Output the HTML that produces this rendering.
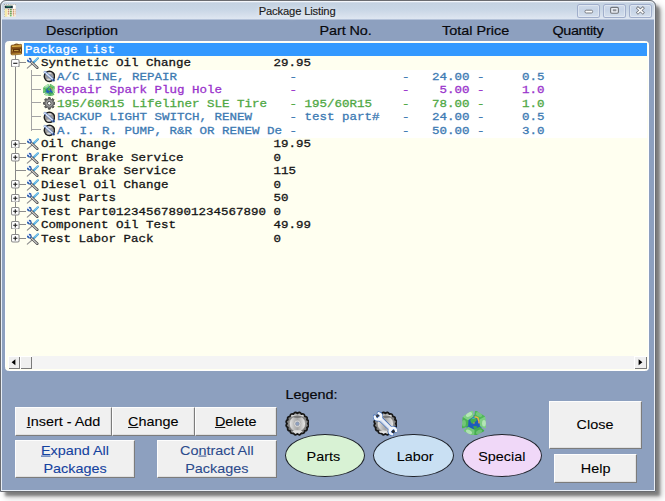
<!DOCTYPE html>
<html><head><meta charset="utf-8"><title>Package Listing</title>
<style>
html,body{margin:0;padding:0;background:#fff;}
body{width:665px;height:501px;overflow:hidden;position:relative;font-family:"Liberation Sans",Arial,sans-serif;}
svg{display:block}
.win{position:absolute;left:0;top:0;width:656px;height:492px;border-radius:6px 6px 1px 1px;background:#8da0bf;box-shadow:4.5px 4.5px 3px -0.5px rgba(0,0,0,.4), 5.5px 5.5px 6px 0px rgba(0,0,0,.2);}
.win:before{content:"";position:absolute;left:0;top:0;right:0;bottom:0;border:1px solid #6a6c70;border-radius:6px 6px 1px 1px;pointer-events:none;z-index:6}
.win:after{content:"";position:absolute;left:1px;top:1px;right:1px;bottom:1px;border:1px solid #e8eef6;border-top-color:#f4f7fb;border-radius:5px 5px 0 0;pointer-events:none;z-index:5}
.tb{position:absolute;left:0;top:0;width:656px;height:20px;border-radius:6px 6px 0 0;background:linear-gradient(to bottom,#dbe4ef 0,#dbe4ef 2px,#c4d2e1 3px,#c9d7e6 10px,#d4deeb 14.5px,#dee6f1 18.6px,#b4c2d9 19.5px,#8da0bf 20px);}
.title{position:absolute;left:0.6px;width:593px;top:3px;-webkit-text-stroke:0.15px #1a1a1a;text-align:center;font-size:11.2px;line-height:16px;color:#1a1a1a;letter-spacing:-0.15px;text-shadow:0 0 5px rgba(255,255,255,.9)}
.wb{position:absolute;top:4.3px;height:13.6px;width:23.4px;box-sizing:border-box;border-radius:2.5px;background:linear-gradient(#cfdbea,#c6d3e6 45%,#c9d6e7 55%,#d6e0ee);box-shadow:inset 0 0 0 1px #a0aecb, inset 0 0 0 2px rgba(255,255,255,.35)}
.hdr{position:absolute;top:22px;font-size:14.4px;line-height:16px;color:#08080c;-webkit-text-stroke:0.22px currentColor;white-space:nowrap;transform:scaleY(0.945);transform-origin:0 13px}
.tree{position:absolute;left:5.2px;top:40.6px;width:643.8px;height:330.4px;box-sizing:border-box;background:#fffff0;border:1.6px solid #fff;border-radius:3.5px;}
.tin{position:absolute;left:0;top:0;width:665px;height:501px}
.tin > *{position:absolute}
.t{font-family:"Liberation Mono","Courier New",monospace;font-weight:normal;-webkit-text-stroke:0.28px currentColor;font-size:10.5px;line-height:13.5px;height:13.5px;white-space:pre;color:#141414;letter-spacing:0;transform:scale(1.1905,0.96);transform-origin:0 72%}
.t.w{color:#fff}
.t.blue{color:#3d7ab3}
.t.purple{color:#9a33cc}
.t.green{color:#4fa844}
.sel{left:24px;width:623px;height:12.6px;background:#3399ff}
.cbg{left:56.5px;width:590.5px;background:#fff}
.hl{height:1px;background:#8c8c8c}
.hl.c{height:1px;background:#a4a4a4}
.vl{width:1px;background:#868686}
.vl.c{width:1px;background:#a4a4a4}
.sb{left:7.6px;top:356px;width:639.6px;height:12.7px;background:#f4f4f4}
.sbb{top:356.2px;width:12.4px;height:12.4px;background:#efefef;box-shadow:inset 1px 1px 0 #fff, inset -1px -1px 0 #7a7a7a}
.btn{position:absolute;background:#f0f0f0;box-sizing:border-box;border:1px solid;border-color:#fdfdfd #7c7c7c #7c7c7c #fdfdfd;box-shadow:inset -1px -1px 0 #e0e0e0;font-size:14.4px;color:#000;text-align:center;white-space:nowrap}
.btn u{text-decoration:underline;text-underline-offset:1px}
.btn.bl{color:#1c3c9c}
.btn.bl .s{position:relative;top:-1px}
.ell{position:absolute;box-sizing:border-box;border:1px solid #20242c;border-radius:50%;font-size:14.4px;color:#000;text-align:center}
.lg{position:absolute}
.s{display:inline-block;transform:scaleY(0.945);transform-origin:50% 70%;-webkit-text-stroke:0.1px currentColor}
.ell .s{-webkit-text-stroke:0.08px currentColor}
</style></head><body>
<svg width="0" height="0" style="position:absolute" aria-hidden="true"><linearGradient id="g-m1" x1="0" y1="0" x2="0" y2="1"><stop offset="0" stop-color="#5a5a5a"/><stop offset="0.14" stop-color="#d8d8d8"/><stop offset="0.24" stop-color="#7c7c7c"/><stop offset="0.5" stop-color="#8c8c8c"/><stop offset="0.82" stop-color="#6c6c6c"/><stop offset="0.93" stop-color="#e0e0e0"/><stop offset="1" stop-color="#666"/></linearGradient><linearGradient id="g-m2" x1="0" y1="0" x2="1" y2="0"><stop offset="0" stop-color="#e8e8e8"/><stop offset="0.3" stop-color="#bcbcbc"/><stop offset="0.5" stop-color="#a4a4a4"/><stop offset="0.7" stop-color="#c0c0c0"/><stop offset="1" stop-color="#ececec"/></linearGradient><linearGradient id="g-br" x1="0" y1="0" x2="0" y2="1"><stop offset="0" stop-color="#a06c24"/><stop offset="0.5" stop-color="#7c4a14"/><stop offset="1" stop-color="#8e5e20"/></linearGradient><radialGradient id="g-cog" cx="50%" cy="50%" r="50%"><stop offset="0" stop-color="#f0f0f0"/><stop offset="0.3" stop-color="#c8c8c8"/><stop offset="0.62" stop-color="#7e7e7e"/><stop offset="1" stop-color="#505050"/></radialGradient></svg>
<div class="win">
 <div class="tb"></div>
 <svg style="position:absolute;left:3.8px;top:3.8px" width="12.4" height="13.4" viewBox="0 0 11 13" preserveAspectRatio="none"><rect x="0.3" y="0.3" width="10.4" height="12.4" fill="#fffdf0" stroke="#777" stroke-width="0.6" stroke-dasharray="0.8 0.8"/><rect x="0.8" y="1.6" width="7" height="2.6" fill="#17333f"/><rect x="2" y="2.2" width="4" height="0.8" fill="#2f8f6a"/><rect x="8" y="1.2" width="2.2" height="3" fill="#fff"/><rect x="0.8" y="4.6" width="2.2" height="7.6" fill="#f6e9a8"/><rect x="3.4" y="4.6" width="7" height="7.6" fill="#fbf6e4"/><path d="M3.4 5.6h7M3.4 7.6h7M3.4 9.6h7" stroke="#a83a2a" stroke-width="0.8" stroke-dasharray="1.2 1"/><path d="M6 5v7" stroke="#3fae4a" stroke-width="1.6" stroke-dasharray="1 1"/><path d="M8.6 5v7" stroke="#d8a070" stroke-width="1" stroke-dasharray="1 1"/></svg>
 <div class="title">Package Listing</div>
 <div class="wb" style="left:577px"><svg width="23.4" height="13" viewBox="0 0 23.4 13"><rect x="8" y="6.2" width="7.6" height="2.8" rx="1.2" fill="#fdfdfd" stroke="#6f7378" stroke-width="0.9"/></svg></div>
 <div class="wb" style="left:603px"><svg width="23.4" height="13" viewBox="0 0 23.4 13"><rect x="7.6" y="3.4" width="7.8" height="5.8" rx="1.2" fill="#e9edf3" stroke="#71757b" stroke-width="1.1"/><rect x="9.8" y="5.2" width="3.6" height="2" rx="0.4" fill="#8c9098"/></svg></div>
 <div class="wb" style="left:628.6px"><svg width="23.4" height="13" viewBox="0 0 23.4 13"><path d="M9 4.2 L13.8 8.6 M13.8 4.2 L9 8.6" stroke="#73777d" stroke-width="3" stroke-linecap="square"/><path d="M9 4.2 L13.8 8.6 M13.8 4.2 L9 8.6" stroke="#fff" stroke-width="1.5" stroke-linecap="square"/></svg></div>
 <div class="hdr" style="left:46px">Description</div>
 <div class="hdr" style="left:319.6px;letter-spacing:-0.1px">Part No.</div>
 <div class="hdr" style="left:442px">Total Price</div>
 <div class="hdr" style="left:552.5px;letter-spacing:-0.36px">Quantity</div>
 <div class="tree"></div>
 <div class="tin">
<div class="vl" style="left:15.1px;top:55.0px;height:184.0px"></div>
<div class="vl c" style="left:31px;top:69.5px;height:61.400000000000006px"></div>
<div class="sel" style="top:43.2px"></div>
<svg class="ic" style="left:9.7px;top:43.2px" width="12.6" height="12.6" viewBox="0 0 13 13"><path d="M4.4 2.2 Q6.6 0.2 9 1.8" fill="none" stroke="#7a4c14" stroke-width="1.2"/><path d="M1 3.2 Q1 2 2.4 2 L11 1.4 Q12.4 1.4 12.4 2.8 L12.6 10 Q12.6 11.4 11 11.6 L2.6 12.4 Q1 12.4 0.9 11 Z" fill="url(#g-br)" stroke="#6a3e10" stroke-width="0.5"/><path d="M2.6 3.4 L11.4 2.9" stroke="#e2b84a" stroke-width="1.3" stroke-linecap="round"/><path d="M1.6 6.2 L12 5.8 L12 8.6 L1.6 9 Z" fill="#5e3208"/><path d="M2.4 6.6v2.2M4.2 7.8h4.6M10.8 6.4v2.2" stroke="#e8c45a" stroke-width="0.8"/><path d="M2.4 11.6 L11.2 10.9" stroke="#caa03c" stroke-width="0.9" stroke-linecap="round"/></svg>
<div class="t w" style="left:24.6px;top:43.6px">Package List</div>
<div class="hl" style="left:15.1px;top:62.4px;width:10.5px"></div>
<svg class="ic" style="left:11.1px;top:58.6px" width="8.6" height="8.6" viewBox="0 0 9 9"><rect x="0.55" y="0.55" width="7.9" height="7.9" rx="1.3" fill="#fff" stroke="#8a8a8a" stroke-width="1.1"/><path d="M2.3 4.5H6.7" stroke="#1a1a1a" stroke-width="1.15"/></svg>
<svg class="ic" style="left:26px;top:57.1px" width="13" height="12.4" viewBox="0 0 14 13"><path d="M7.2 6.8 L1.4 11.8" stroke="#8e8e8e" stroke-width="1.2" stroke-linecap="round"/><path d="M12.8 1.2 L8.2 5.6" stroke="#4aa6dc" stroke-width="2.3" stroke-linecap="round"/><path d="M12.6 1 L9.4 4" stroke="#a8dcf4" stroke-width="0.9" stroke-linecap="round"/><path d="M4.6 4.2 L12.2 11.4" stroke="#4c4c4c" stroke-width="2.7" stroke-linecap="round"/><path d="M5.4 5 L12 11.2" stroke="#dadada" stroke-width="1.1" stroke-linecap="round"/><circle cx="3.6" cy="3.2" r="2.5" fill="#2c5eb0"/><path d="M3.8 3.4 L0.6 2.2 L2.6 0.2 Z" fill="#fbfdff"/><circle cx="3.9" cy="3.5" r="0.9" fill="#e8f0fb"/></svg>
<div class="t" style="left:41.3px;top:57.1px">Synthetic Oil Change           29.95</div>
<div class="cbg" style="top:70.2px;height:67.5px"></div>
<div class="hl c" style="left:31px;top:75.2px;width:9.5px"></div>
<svg class="ic" style="left:42.6px;top:70.3px" width="12.6" height="12.6" viewBox="0 0 13 13"><circle cx="6.6" cy="6.5" r="5.3" fill="#9a9a9a" stroke="#1e1e1e" stroke-width="1.5"/><ellipse cx="6.6" cy="3.4" rx="2.4" ry="1" fill="#d0d0d0"/><ellipse cx="6" cy="9.8" rx="2.4" ry="1" fill="#d8d8d8"/><path d="M2 2.2 L11 10.6" stroke="#4a74c0" stroke-width="2.6" stroke-linecap="round"/><path d="M3 3.2 L10 9.6" stroke="#e4e8f0" stroke-width="1.5" stroke-linecap="butt"/><circle cx="2" cy="2.2" r="0.9" fill="#f4f6fa"/><circle cx="11" cy="10.4" r="0.8" fill="#1c2a48"/></svg>
<div class="t blue" style="left:57.1px;top:70.6px">A/C LINE, REPAIR               -              -   24.00 -     0.5</div>
<div class="hl c" style="left:31px;top:88.7px;width:9.5px"></div>
<svg class="ic" style="left:42.6px;top:83.8px" width="12.6" height="12.6" viewBox="0 0 24 24"><circle cx="12" cy="12.4" r="8.4" fill="#1f5cbc"/><path d="M8.6 8 q3.4 -2.6 6 -0.4 q0.6 2.4 -1.6 3.2 q-1.2 2.6 -3.4 1.4 q-2.2 -1.8 -1 -4.2z" fill="#44b04a"/><path d="M10 7.2 q2 -1.2 3.6 -0.2 q-1.6 1.4 -3.6 0.2z" fill="#4aa8f0"/><path d="M11 15.4 q2.4 -1 4.6 0.4 q-1 2.4 -3.4 2.2z" fill="#3fa648"/><path d="M11.4 11.4 l1.4 0.2 l-0.4 1.2 l-1.2 -0.2z" fill="#f0a03a"/><path d="M13.86 0.45L21.98 5.72L18.04 8.28L13.13 5.09Z" fill="#4fb858" stroke="#4fb858" stroke-width="1.8" stroke-linejoin="round"/><ellipse cx="17.00" cy="3.54" rx="3.3" ry="1.9" transform="rotate(30 17.00 3.54)" fill="#d8f4d8" opacity="0.28"/><path d="M22.60 6.80L23.11 16.46L18.72 14.78L18.42 8.93Z" fill="#7ccf82" stroke="#7ccf82" stroke-width="1.8" stroke-linejoin="round"/><ellipse cx="22.00" cy="12.20" rx="3.3" ry="1.9" transform="rotate(90 22.00 12.20)" fill="#d8f4d8" opacity="0.6"/><path d="M21.25 19.69L12.62 24.08L12.38 19.39L17.60 16.73Z" fill="#46ae50" stroke="#46ae50" stroke-width="1.8" stroke-linejoin="round"/><ellipse cx="17.00" cy="20.86" rx="3.3" ry="1.9" transform="rotate(150 17.00 20.86)" fill="#d8f4d8" opacity="0.28"/><path d="M11.38 24.08L2.75 19.69L6.40 16.73L11.62 19.39Z" fill="#72c878" stroke="#72c878" stroke-width="1.8" stroke-linejoin="round"/><ellipse cx="7.00" cy="20.86" rx="3.3" ry="1.9" transform="rotate(210 7.00 20.86)" fill="#d8f4d8" opacity="0.6"/><path d="M0.89 16.46L1.40 6.80L5.58 8.93L5.28 14.78Z" fill="#4cb454" stroke="#4cb454" stroke-width="1.8" stroke-linejoin="round"/><ellipse cx="2.00" cy="12.20" rx="3.3" ry="1.9" transform="rotate(270 2.00 12.20)" fill="#d8f4d8" opacity="0.28"/><path d="M2.02 5.72L10.14 0.45L10.87 5.09L5.96 8.28Z" fill="#80d286" stroke="#80d286" stroke-width="1.8" stroke-linejoin="round"/><ellipse cx="7.00" cy="3.54" rx="3.3" ry="1.9" transform="rotate(330 7.00 3.54)" fill="#d8f4d8" opacity="0.6"/><path d="M13 6 q2.2 -0.2 3.2 1.2 M16.2 8.6 q1.2 1.4 0.8 3.2" stroke="#f2b43a" stroke-width="1.5" fill="none" stroke-linecap="round"/></svg>
<div class="t purple" style="left:57.1px;top:84.1px">Repair Spark Plug Hole         -              -    5.00 -     1.0</div>
<div class="hl c" style="left:31px;top:102.2px;width:9.5px"></div>
<svg class="ic" style="left:42.6px;top:97.3px" width="12.6" height="12.6" viewBox="0 0 13 13"><path d="M10.66 4.78L10.86 5.37L12.54 5.62L12.54 7.38L10.86 7.63L10.66 8.22L10.38 8.78L11.39 10.15L10.15 11.39L8.78 10.38L8.22 10.66L7.63 10.86L7.38 12.54L5.62 12.54L5.37 10.86L4.78 10.66L4.22 10.38L2.85 11.39L1.61 10.15L2.62 8.78L2.34 8.22L2.14 7.63L0.46 7.38L0.46 5.62L2.14 5.37L2.34 4.78L2.62 4.22L1.61 2.85L2.85 1.61L4.22 2.62L4.78 2.34L5.37 2.14L5.62 0.46L7.38 0.46L7.63 2.14L8.22 2.34L8.78 2.62L10.15 1.61L11.39 2.85L10.38 4.22Z" fill="url(#g-cog)" stroke="#484848" stroke-width="0.9" stroke-linejoin="round"/><circle cx="6.5" cy="6.5" r="1.9" fill="#fff" stroke="#3a3a3a" stroke-width="1"/><circle cx="6.5" cy="6.5" r="0.7" fill="#fff"/></svg>
<div class="t green" style="left:57.1px;top:97.6px">195/60R15 Lifeliner SLE Tire   - 195/60R15    -   78.00 -     1.0</div>
<div class="hl c" style="left:31px;top:115.7px;width:9.5px"></div>
<svg class="ic" style="left:42.6px;top:110.8px" width="12.6" height="12.6" viewBox="0 0 13 13"><circle cx="6.6" cy="6.5" r="5.3" fill="#9a9a9a" stroke="#1e1e1e" stroke-width="1.5"/><ellipse cx="6.6" cy="3.4" rx="2.4" ry="1" fill="#d0d0d0"/><ellipse cx="6" cy="9.8" rx="2.4" ry="1" fill="#d8d8d8"/><path d="M2 2.2 L11 10.6" stroke="#4a74c0" stroke-width="2.6" stroke-linecap="round"/><path d="M3 3.2 L10 9.6" stroke="#e4e8f0" stroke-width="1.5" stroke-linecap="butt"/><circle cx="2" cy="2.2" r="0.9" fill="#f4f6fa"/><circle cx="11" cy="10.4" r="0.8" fill="#1c2a48"/></svg>
<div class="t blue" style="left:57.1px;top:111.1px">BACKUP LIGHT SWITCH, RENEW     - test part#   -   24.00 -     0.5</div>
<div class="hl c" style="left:31px;top:129.2px;width:9.5px"></div>
<svg class="ic" style="left:42.6px;top:124.3px" width="12.6" height="12.6" viewBox="0 0 13 13"><circle cx="6.6" cy="6.5" r="5.3" fill="#9a9a9a" stroke="#1e1e1e" stroke-width="1.5"/><ellipse cx="6.6" cy="3.4" rx="2.4" ry="1" fill="#d0d0d0"/><ellipse cx="6" cy="9.8" rx="2.4" ry="1" fill="#d8d8d8"/><path d="M2 2.2 L11 10.6" stroke="#4a74c0" stroke-width="2.6" stroke-linecap="round"/><path d="M3 3.2 L10 9.6" stroke="#e4e8f0" stroke-width="1.5" stroke-linecap="butt"/><circle cx="2" cy="2.2" r="0.9" fill="#f4f6fa"/><circle cx="11" cy="10.4" r="0.8" fill="#1c2a48"/></svg>
<div class="t blue" style="left:57.1px;top:124.6px">A. I. R. PUMP, R&amp;R OR RENEW De -              -   50.00 -     3.0</div>
<div class="hl" style="left:15.1px;top:143.4px;width:10.5px"></div>
<svg class="ic" style="left:11.1px;top:139.6px" width="8.6" height="8.6" viewBox="0 0 9 9"><rect x="0.55" y="0.55" width="7.9" height="7.9" rx="1.3" fill="#fff" stroke="#8a8a8a" stroke-width="1.1"/><path d="M2.3 4.5H6.7M4.5 2.3V6.7" stroke="#1a1a1a" stroke-width="1.15"/></svg>
<svg class="ic" style="left:26px;top:138.1px" width="13" height="12.4" viewBox="0 0 14 13"><path d="M7.2 6.8 L1.4 11.8" stroke="#8e8e8e" stroke-width="1.2" stroke-linecap="round"/><path d="M12.8 1.2 L8.2 5.6" stroke="#4aa6dc" stroke-width="2.3" stroke-linecap="round"/><path d="M12.6 1 L9.4 4" stroke="#a8dcf4" stroke-width="0.9" stroke-linecap="round"/><path d="M4.6 4.2 L12.2 11.4" stroke="#4c4c4c" stroke-width="2.7" stroke-linecap="round"/><path d="M5.4 5 L12 11.2" stroke="#dadada" stroke-width="1.1" stroke-linecap="round"/><circle cx="3.6" cy="3.2" r="2.5" fill="#2c5eb0"/><path d="M3.8 3.4 L0.6 2.2 L2.6 0.2 Z" fill="#fbfdff"/><circle cx="3.9" cy="3.5" r="0.9" fill="#e8f0fb"/></svg>
<div class="t" style="left:41.3px;top:138.1px">Oil Change                     19.95</div>
<div class="hl" style="left:15.1px;top:156.9px;width:10.5px"></div>
<svg class="ic" style="left:11.1px;top:153.1px" width="8.6" height="8.6" viewBox="0 0 9 9"><rect x="0.55" y="0.55" width="7.9" height="7.9" rx="1.3" fill="#fff" stroke="#8a8a8a" stroke-width="1.1"/><path d="M2.3 4.5H6.7M4.5 2.3V6.7" stroke="#1a1a1a" stroke-width="1.15"/></svg>
<svg class="ic" style="left:26px;top:151.6px" width="13" height="12.4" viewBox="0 0 14 13"><path d="M7.2 6.8 L1.4 11.8" stroke="#8e8e8e" stroke-width="1.2" stroke-linecap="round"/><path d="M12.8 1.2 L8.2 5.6" stroke="#4aa6dc" stroke-width="2.3" stroke-linecap="round"/><path d="M12.6 1 L9.4 4" stroke="#a8dcf4" stroke-width="0.9" stroke-linecap="round"/><path d="M4.6 4.2 L12.2 11.4" stroke="#4c4c4c" stroke-width="2.7" stroke-linecap="round"/><path d="M5.4 5 L12 11.2" stroke="#dadada" stroke-width="1.1" stroke-linecap="round"/><circle cx="3.6" cy="3.2" r="2.5" fill="#2c5eb0"/><path d="M3.8 3.4 L0.6 2.2 L2.6 0.2 Z" fill="#fbfdff"/><circle cx="3.9" cy="3.5" r="0.9" fill="#e8f0fb"/></svg>
<div class="t" style="left:41.3px;top:151.6px">Front Brake Service            0</div>
<div class="hl" style="left:15.1px;top:170.4px;width:10.5px"></div>
<svg class="ic" style="left:26px;top:165.1px" width="13" height="12.4" viewBox="0 0 14 13"><path d="M7.2 6.8 L1.4 11.8" stroke="#8e8e8e" stroke-width="1.2" stroke-linecap="round"/><path d="M12.8 1.2 L8.2 5.6" stroke="#4aa6dc" stroke-width="2.3" stroke-linecap="round"/><path d="M12.6 1 L9.4 4" stroke="#a8dcf4" stroke-width="0.9" stroke-linecap="round"/><path d="M4.6 4.2 L12.2 11.4" stroke="#4c4c4c" stroke-width="2.7" stroke-linecap="round"/><path d="M5.4 5 L12 11.2" stroke="#dadada" stroke-width="1.1" stroke-linecap="round"/><circle cx="3.6" cy="3.2" r="2.5" fill="#2c5eb0"/><path d="M3.8 3.4 L0.6 2.2 L2.6 0.2 Z" fill="#fbfdff"/><circle cx="3.9" cy="3.5" r="0.9" fill="#e8f0fb"/></svg>
<div class="t" style="left:41.3px;top:165.1px">Rear Brake Service             115</div>
<div class="hl" style="left:15.1px;top:183.9px;width:10.5px"></div>
<svg class="ic" style="left:11.1px;top:180.1px" width="8.6" height="8.6" viewBox="0 0 9 9"><rect x="0.55" y="0.55" width="7.9" height="7.9" rx="1.3" fill="#fff" stroke="#8a8a8a" stroke-width="1.1"/><path d="M2.3 4.5H6.7M4.5 2.3V6.7" stroke="#1a1a1a" stroke-width="1.15"/></svg>
<svg class="ic" style="left:26px;top:178.6px" width="13" height="12.4" viewBox="0 0 14 13"><path d="M7.2 6.8 L1.4 11.8" stroke="#8e8e8e" stroke-width="1.2" stroke-linecap="round"/><path d="M12.8 1.2 L8.2 5.6" stroke="#4aa6dc" stroke-width="2.3" stroke-linecap="round"/><path d="M12.6 1 L9.4 4" stroke="#a8dcf4" stroke-width="0.9" stroke-linecap="round"/><path d="M4.6 4.2 L12.2 11.4" stroke="#4c4c4c" stroke-width="2.7" stroke-linecap="round"/><path d="M5.4 5 L12 11.2" stroke="#dadada" stroke-width="1.1" stroke-linecap="round"/><circle cx="3.6" cy="3.2" r="2.5" fill="#2c5eb0"/><path d="M3.8 3.4 L0.6 2.2 L2.6 0.2 Z" fill="#fbfdff"/><circle cx="3.9" cy="3.5" r="0.9" fill="#e8f0fb"/></svg>
<div class="t" style="left:41.3px;top:178.6px">Diesel Oil Change              0</div>
<div class="hl" style="left:15.1px;top:197.4px;width:10.5px"></div>
<svg class="ic" style="left:11.1px;top:193.6px" width="8.6" height="8.6" viewBox="0 0 9 9"><rect x="0.55" y="0.55" width="7.9" height="7.9" rx="1.3" fill="#fff" stroke="#8a8a8a" stroke-width="1.1"/><path d="M2.3 4.5H6.7M4.5 2.3V6.7" stroke="#1a1a1a" stroke-width="1.15"/></svg>
<svg class="ic" style="left:26px;top:192.1px" width="13" height="12.4" viewBox="0 0 14 13"><path d="M7.2 6.8 L1.4 11.8" stroke="#8e8e8e" stroke-width="1.2" stroke-linecap="round"/><path d="M12.8 1.2 L8.2 5.6" stroke="#4aa6dc" stroke-width="2.3" stroke-linecap="round"/><path d="M12.6 1 L9.4 4" stroke="#a8dcf4" stroke-width="0.9" stroke-linecap="round"/><path d="M4.6 4.2 L12.2 11.4" stroke="#4c4c4c" stroke-width="2.7" stroke-linecap="round"/><path d="M5.4 5 L12 11.2" stroke="#dadada" stroke-width="1.1" stroke-linecap="round"/><circle cx="3.6" cy="3.2" r="2.5" fill="#2c5eb0"/><path d="M3.8 3.4 L0.6 2.2 L2.6 0.2 Z" fill="#fbfdff"/><circle cx="3.9" cy="3.5" r="0.9" fill="#e8f0fb"/></svg>
<div class="t" style="left:41.3px;top:192.1px">Just Parts                     50</div>
<div class="hl" style="left:15.1px;top:210.9px;width:10.5px"></div>
<svg class="ic" style="left:11.1px;top:207.1px" width="8.6" height="8.6" viewBox="0 0 9 9"><rect x="0.55" y="0.55" width="7.9" height="7.9" rx="1.3" fill="#fff" stroke="#8a8a8a" stroke-width="1.1"/><path d="M2.3 4.5H6.7M4.5 2.3V6.7" stroke="#1a1a1a" stroke-width="1.15"/></svg>
<svg class="ic" style="left:26px;top:205.6px" width="13" height="12.4" viewBox="0 0 14 13"><path d="M7.2 6.8 L1.4 11.8" stroke="#8e8e8e" stroke-width="1.2" stroke-linecap="round"/><path d="M12.8 1.2 L8.2 5.6" stroke="#4aa6dc" stroke-width="2.3" stroke-linecap="round"/><path d="M12.6 1 L9.4 4" stroke="#a8dcf4" stroke-width="0.9" stroke-linecap="round"/><path d="M4.6 4.2 L12.2 11.4" stroke="#4c4c4c" stroke-width="2.7" stroke-linecap="round"/><path d="M5.4 5 L12 11.2" stroke="#dadada" stroke-width="1.1" stroke-linecap="round"/><circle cx="3.6" cy="3.2" r="2.5" fill="#2c5eb0"/><path d="M3.8 3.4 L0.6 2.2 L2.6 0.2 Z" fill="#fbfdff"/><circle cx="3.9" cy="3.5" r="0.9" fill="#e8f0fb"/></svg>
<div class="t" style="left:41.3px;top:205.6px">Test Part012345678901234567890 0</div>
<div class="hl" style="left:15.1px;top:224.4px;width:10.5px"></div>
<svg class="ic" style="left:11.1px;top:220.6px" width="8.6" height="8.6" viewBox="0 0 9 9"><rect x="0.55" y="0.55" width="7.9" height="7.9" rx="1.3" fill="#fff" stroke="#8a8a8a" stroke-width="1.1"/><path d="M2.3 4.5H6.7M4.5 2.3V6.7" stroke="#1a1a1a" stroke-width="1.15"/></svg>
<svg class="ic" style="left:26px;top:219.1px" width="13" height="12.4" viewBox="0 0 14 13"><path d="M7.2 6.8 L1.4 11.8" stroke="#8e8e8e" stroke-width="1.2" stroke-linecap="round"/><path d="M12.8 1.2 L8.2 5.6" stroke="#4aa6dc" stroke-width="2.3" stroke-linecap="round"/><path d="M12.6 1 L9.4 4" stroke="#a8dcf4" stroke-width="0.9" stroke-linecap="round"/><path d="M4.6 4.2 L12.2 11.4" stroke="#4c4c4c" stroke-width="2.7" stroke-linecap="round"/><path d="M5.4 5 L12 11.2" stroke="#dadada" stroke-width="1.1" stroke-linecap="round"/><circle cx="3.6" cy="3.2" r="2.5" fill="#2c5eb0"/><path d="M3.8 3.4 L0.6 2.2 L2.6 0.2 Z" fill="#fbfdff"/><circle cx="3.9" cy="3.5" r="0.9" fill="#e8f0fb"/></svg>
<div class="t" style="left:41.3px;top:219.1px">Component Oil Test             49.99</div>
<div class="hl" style="left:15.1px;top:237.9px;width:10.5px"></div>
<svg class="ic" style="left:11.1px;top:234.1px" width="8.6" height="8.6" viewBox="0 0 9 9"><rect x="0.55" y="0.55" width="7.9" height="7.9" rx="1.3" fill="#fff" stroke="#8a8a8a" stroke-width="1.1"/><path d="M2.3 4.5H6.7M4.5 2.3V6.7" stroke="#1a1a1a" stroke-width="1.15"/></svg>
<svg class="ic" style="left:26px;top:232.6px" width="13" height="12.4" viewBox="0 0 14 13"><path d="M7.2 6.8 L1.4 11.8" stroke="#8e8e8e" stroke-width="1.2" stroke-linecap="round"/><path d="M12.8 1.2 L8.2 5.6" stroke="#4aa6dc" stroke-width="2.3" stroke-linecap="round"/><path d="M12.6 1 L9.4 4" stroke="#a8dcf4" stroke-width="0.9" stroke-linecap="round"/><path d="M4.6 4.2 L12.2 11.4" stroke="#4c4c4c" stroke-width="2.7" stroke-linecap="round"/><path d="M5.4 5 L12 11.2" stroke="#dadada" stroke-width="1.1" stroke-linecap="round"/><circle cx="3.6" cy="3.2" r="2.5" fill="#2c5eb0"/><path d="M3.8 3.4 L0.6 2.2 L2.6 0.2 Z" fill="#fbfdff"/><circle cx="3.9" cy="3.5" r="0.9" fill="#e8f0fb"/></svg>
<div class="t" style="left:41.3px;top:232.6px">Test Labor Pack                0</div>
 <div class="sb"></div>
 <div class="sbb" style="left:7.6px"><svg width="12.4" height="12.4" viewBox="0 0 12.4 12.4"><path d="M7.4 3.2 L3.6 6.2 L7.4 9.2 Z" fill="#000"/></svg></div>
 <div class="sbb" style="left:19.9px;width:12.2px"></div>
 <div class="sbb" style="left:634.4px"><svg width="12.4" height="12.4" viewBox="0 0 12.4 12.4"><path d="M4.6 3.2 L8.4 6.2 L4.6 9.2 Z" fill="#000"/></svg></div>
 </div>
 <div class="hdr" style="left:285.5px;top:386px">Legend:</div>
 <div class="btn" style="left:15px;top:407px;width:97px;height:29px;line-height:26px"><span class="s"><u>I</u>nsert - Add</span></div>
 <div class="btn" style="left:112px;top:407px;width:82.5px;height:29px;line-height:26px"><span class="s"><u>C</u>hange</span></div>
 <div class="btn" style="left:194.5px;top:407px;width:82.5px;height:29px;line-height:26px"><span class="s"><u>D</u>elete</span></div>
 <div class="btn bl" style="color:#14429f;left:15px;top:440px;width:120px;height:37.5px;line-height:18.6px;padding-top:0;margin-top:0"><span class="s"><u>E</u>xpand All<br>Packages</span></div>
 <div class="btn bl" style="color:#2c4b8c;left:156.6px;top:440px;width:120.4px;height:37.5px;line-height:18.6px;padding-top:0;margin-top:0"><span class="s">Co<u>n</u>tract All<br>Packages</span></div>
 <div class="btn" style="left:548.5px;top:401px;width:93px;height:47.5px;line-height:45px"><span class="s">Close</span></div>
 <div class="btn" style="left:554.3px;top:454px;width:82.7px;height:29.2px;line-height:27px"><span class="s">Help</span></div>
 <svg class="lg" style="left:284.6px;top:411px" width="24.8" height="25.2" viewBox="0 0 24 24"><path d="M22.00 12.00Q24.04 14.40 21.24 15.83Q22.21 18.82 19.07 19.07Q18.82 22.21 15.83 21.24Q14.40 24.04 12.00 22.00Q9.60 24.04 8.17 21.24Q5.18 22.21 4.93 19.07Q1.79 18.82 2.76 15.83Q-0.04 14.40 2.00 12.00Q-0.04 9.60 2.76 8.17Q1.79 5.18 4.93 4.93Q5.18 1.79 8.17 2.76Q9.60 -0.04 12.00 2.00Q14.40 -0.04 15.83 2.76Q18.82 1.79 19.07 4.93Q22.21 5.18 21.24 8.17Q24.04 9.60 22.00 12.00Z" fill="url(#g-m1)" stroke="#161616" stroke-width="1.7" stroke-linejoin="round"/><circle cx="12" cy="12.2" r="7.9" fill="url(#g-m2)" stroke="#7c7c7c" stroke-width="0.6"/><ellipse cx="12" cy="5.6" rx="4" ry="1.1" fill="#555" opacity=".55"/><ellipse cx="12" cy="19.6" rx="4.6" ry="1.2" fill="#fff" opacity=".7"/><circle cx="12" cy="12.2" r="3.4" fill="#dedede" stroke="#a8a8a8" stroke-width="0.6"/><circle cx="12" cy="12.2" r="1.9" fill="#8da0bf" stroke="#8a8f9a" stroke-width="0.5"/></svg>
 <svg class="lg" style="left:372.6px;top:411px" width="24.8" height="25.2" viewBox="0 0 24 24"><path d="M22.00 12.00Q24.04 14.40 21.24 15.83Q22.21 18.82 19.07 19.07Q18.82 22.21 15.83 21.24Q14.40 24.04 12.00 22.00Q9.60 24.04 8.17 21.24Q5.18 22.21 4.93 19.07Q1.79 18.82 2.76 15.83Q-0.04 14.40 2.00 12.00Q-0.04 9.60 2.76 8.17Q1.79 5.18 4.93 4.93Q5.18 1.79 8.17 2.76Q9.60 -0.04 12.00 2.00Q14.40 -0.04 15.83 2.76Q18.82 1.79 19.07 4.93Q22.21 5.18 21.24 8.17Q24.04 9.60 22.00 12.00Z" fill="url(#g-m1)" stroke="#161616" stroke-width="1.7" stroke-linejoin="round"/><circle cx="12" cy="12.2" r="7.9" fill="url(#g-m2)" stroke="#7c7c7c" stroke-width="0.6"/><ellipse cx="13" cy="5.6" rx="3.6" ry="1.1" fill="#555" opacity=".55"/><ellipse cx="10" cy="19.8" rx="4" ry="1.2" fill="#fff" opacity=".7"/><g stroke-linecap="round" stroke-linejoin="round" fill="none"><path d="M6.5 6.7 L17.5 17.5" stroke="#3464b4" stroke-width="5"/><path d="M5.44 1.97 A3.1 3.1 0 1 1 1.7 5.1" stroke="#3464b4" stroke-width="3.6"/><path d="M18.56 22.23 A3.1 3.1 0 1 1 22.3 19.1" stroke="#3464b4" stroke-width="3.6"/><path d="M6.5 6.7 L17.5 17.5" stroke="#e9eef6" stroke-width="3.6"/><path d="M5.44 1.97 A3.1 3.1 0 1 1 1.7 5.1" stroke="#f4f8fd" stroke-width="2.5"/><path d="M18.56 22.23 A3.1 3.1 0 1 1 22.3 19.1" stroke="#f4f8fd" stroke-width="2.5"/><path d="M7.5 9.2 L15.2 16.8" stroke="#c9d6ea" stroke-width="1"/><circle cx="19.6" cy="19.7" r="1.5" fill="#26282e" stroke="none"/><circle cx="4.3" cy="4.4" r="1.3" fill="#3a3c44" stroke="none"/></g></svg>
 <svg class="lg" style="left:462px;top:411px" width="24" height="24" viewBox="0 0 24 24"><circle cx="12" cy="12.4" r="8.4" fill="#1f5cbc"/><path d="M8.6 8 q3.4 -2.6 6 -0.4 q0.6 2.4 -1.6 3.2 q-1.2 2.6 -3.4 1.4 q-2.2 -1.8 -1 -4.2z" fill="#44b04a"/><path d="M10 7.2 q2 -1.2 3.6 -0.2 q-1.6 1.4 -3.6 0.2z" fill="#4aa8f0"/><path d="M11 15.4 q2.4 -1 4.6 0.4 q-1 2.4 -3.4 2.2z" fill="#3fa648"/><path d="M11.4 11.4 l1.4 0.2 l-0.4 1.2 l-1.2 -0.2z" fill="#f0a03a"/><path d="M13.86 0.45L21.98 5.72L18.04 8.28L13.13 5.09Z" fill="#4fb858" stroke="#4fb858" stroke-width="1.8" stroke-linejoin="round"/><ellipse cx="17.00" cy="3.54" rx="3.3" ry="1.9" transform="rotate(30 17.00 3.54)" fill="#d8f4d8" opacity="0.28"/><path d="M22.60 6.80L23.11 16.46L18.72 14.78L18.42 8.93Z" fill="#7ccf82" stroke="#7ccf82" stroke-width="1.8" stroke-linejoin="round"/><ellipse cx="22.00" cy="12.20" rx="3.3" ry="1.9" transform="rotate(90 22.00 12.20)" fill="#d8f4d8" opacity="0.6"/><path d="M21.25 19.69L12.62 24.08L12.38 19.39L17.60 16.73Z" fill="#46ae50" stroke="#46ae50" stroke-width="1.8" stroke-linejoin="round"/><ellipse cx="17.00" cy="20.86" rx="3.3" ry="1.9" transform="rotate(150 17.00 20.86)" fill="#d8f4d8" opacity="0.28"/><path d="M11.38 24.08L2.75 19.69L6.40 16.73L11.62 19.39Z" fill="#72c878" stroke="#72c878" stroke-width="1.8" stroke-linejoin="round"/><ellipse cx="7.00" cy="20.86" rx="3.3" ry="1.9" transform="rotate(210 7.00 20.86)" fill="#d8f4d8" opacity="0.6"/><path d="M0.89 16.46L1.40 6.80L5.58 8.93L5.28 14.78Z" fill="#4cb454" stroke="#4cb454" stroke-width="1.8" stroke-linejoin="round"/><ellipse cx="2.00" cy="12.20" rx="3.3" ry="1.9" transform="rotate(270 2.00 12.20)" fill="#d8f4d8" opacity="0.28"/><path d="M2.02 5.72L10.14 0.45L10.87 5.09L5.96 8.28Z" fill="#80d286" stroke="#80d286" stroke-width="1.8" stroke-linejoin="round"/><ellipse cx="7.00" cy="3.54" rx="3.3" ry="1.9" transform="rotate(330 7.00 3.54)" fill="#d8f4d8" opacity="0.6"/><path d="M13 6 q2.2 -0.2 3.2 1.2 M16.2 8.6 q1.2 1.4 0.8 3.2" stroke="#f2b43a" stroke-width="1.5" fill="none" stroke-linecap="round"/></svg>
 <div class="ell" style="left:284.6px;top:433.9px;width:80.5px;height:43.4px;line-height:41.4px;padding-top:1px;background:#d8f2d4;padding-right:3px"><span class="s">Parts</span></div>
 <div class="ell" style="left:373px;top:433.9px;width:80.5px;height:43.4px;line-height:41.4px;padding-top:1px;background:#c9e0f3;padding-left:4px"><span class="s">Labor</span></div>
 <div class="ell" style="left:461.5px;top:433.9px;width:80.5px;height:43.4px;line-height:41.4px;padding-top:1px;background:#f0d8f8"><span class="s">Special</span></div>
</div>
</body></html>
